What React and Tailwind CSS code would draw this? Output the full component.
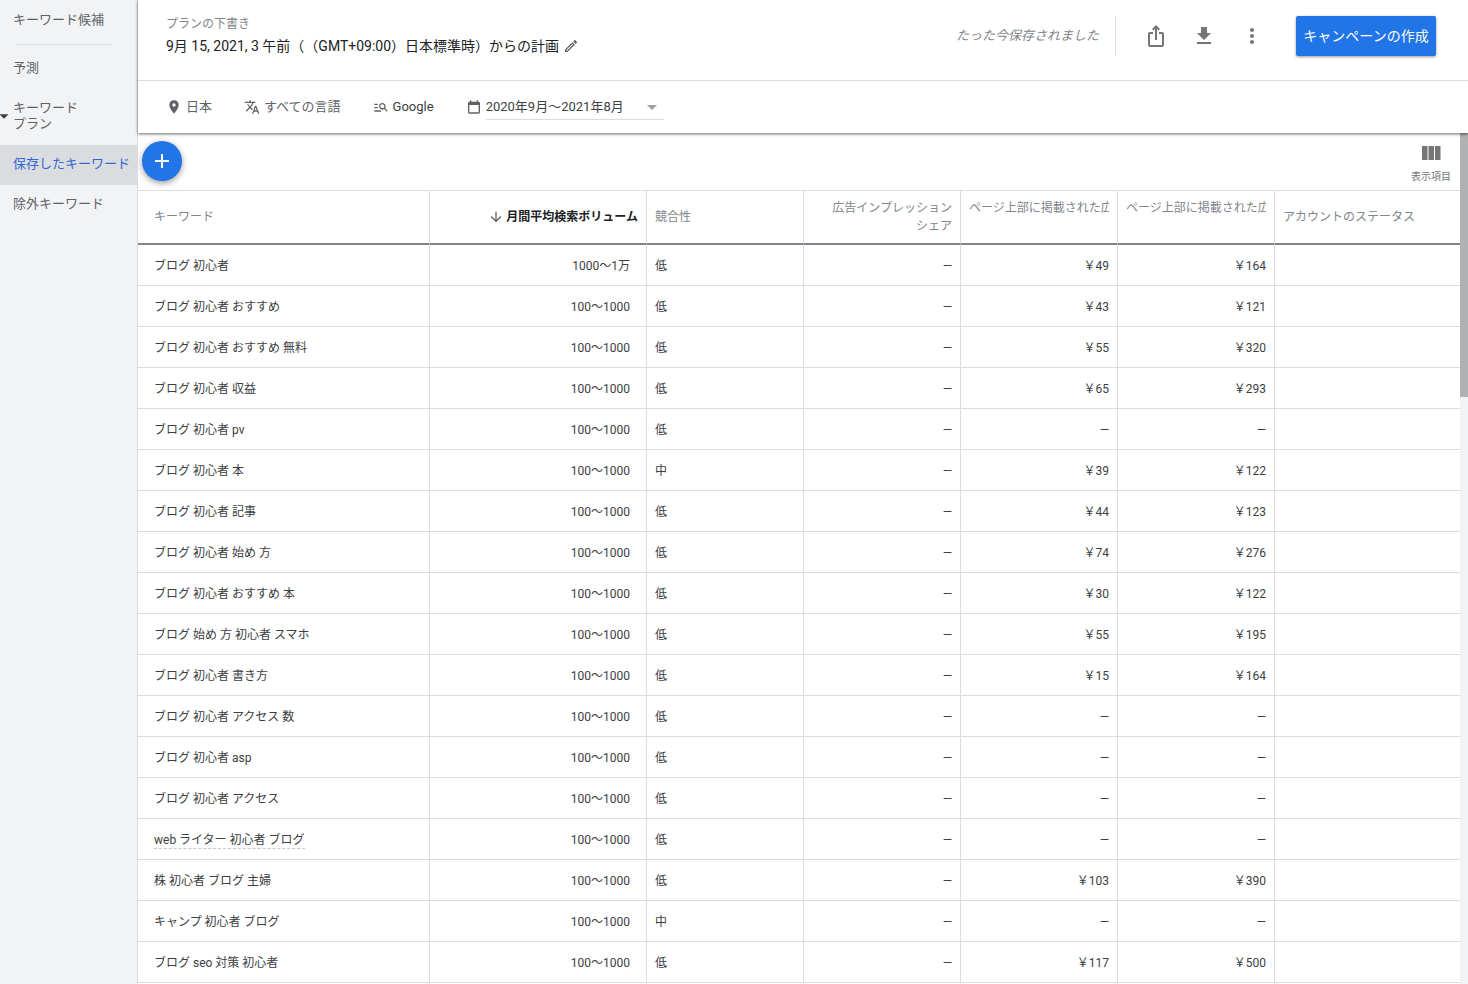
import { useState } from 'react'
import { MdAdd, MdArrowDownward, MdArrowDropDown, MdFileDownload, MdIosShare, MdLocationOn, MdManageSearch, MdMoreVert, MdOutlineEdit, MdTranslate } from 'react-icons/md'

const KEYWORDS = [
  { keyword: 'ブログ 初心者', volume: '1000〜1万', competition: '低', low: '￥49', high: '￥164' },
  { keyword: 'ブログ 初心者 おすすめ', volume: '100〜1000', competition: '低', low: '￥43', high: '￥121' },
  { keyword: 'ブログ 初心者 おすすめ 無料', volume: '100〜1000', competition: '低', low: '￥55', high: '￥320' },
  { keyword: 'ブログ 初心者 収益', volume: '100〜1000', competition: '低', low: '￥65', high: '￥293' },
  { keyword: 'ブログ 初心者 pv', volume: '100〜1000', competition: '低' },
  { keyword: 'ブログ 初心者 本', volume: '100〜1000', competition: '中', low: '￥39', high: '￥122' },
  { keyword: 'ブログ 初心者 記事', volume: '100〜1000', competition: '低', low: '￥44', high: '￥123' },
  { keyword: 'ブログ 初心者 始め 方', volume: '100〜1000', competition: '低', low: '￥74', high: '￥276' },
  { keyword: 'ブログ 初心者 おすすめ 本', volume: '100〜1000', competition: '低', low: '￥30', high: '￥122' },
  { keyword: 'ブログ 始め 方 初心者 スマホ', volume: '100〜1000', competition: '低', low: '￥55', high: '￥195' },
  { keyword: 'ブログ 初心者 書き方', volume: '100〜1000', competition: '低', low: '￥15', high: '￥164' },
  { keyword: 'ブログ 初心者 アクセス 数', volume: '100〜1000', competition: '低' },
  { keyword: 'ブログ 初心者 asp', volume: '100〜1000', competition: '低' },
  { keyword: 'ブログ 初心者 アクセス', volume: '100〜1000', competition: '低' },
  { keyword: 'web ライター 初心者 ブログ', volume: '100〜1000', competition: '低', hint: true },
  { keyword: '株 初心者 ブログ 主婦', volume: '100〜1000', competition: '低', low: '￥103', high: '￥390' },
  { keyword: 'キャンプ 初心者 ブログ', volume: '100〜1000', competition: '中' },
  { keyword: 'ブログ seo 対策 初心者', volume: '100〜1000', competition: '低', low: '￥117', high: '￥500' },
]

function CalendarIcon() {
  return (
    <svg viewBox="0 0 24 24" className="w-4 h-4 fill-current" aria-hidden="true">
      <path d="M19 4h-1V2h-2v2H8V2H6v2H5c-1.1 0-2 .9-2 2v14c0 1.1.9 2 2 2h14c1.1 0 2-.9 2-2V6c0-1.1-.9-2-2-2zm0 16H5V9h14v11z" />
    </svg>
  )
}

function ColumnsIcon() {
  return (
    <svg viewBox="0 0 24 24" className="w-6 h-6 fill-current" aria-hidden="true">
      <path d="M9.5 19h5.5V5H9.5v14zM3 19h5.5V5H3v14zM16 5v14h5.5V5H16z" />
    </svg>
  )
}

function Sidebar() {
  return (
    <nav className="w-[138px] shrink-0 bg-[#f1f3f4] border-r border-[#dadce0] text-[13px] leading-4 text-[#5f6368]">
      <a href="#ideas" className="flex items-center h-10 pl-[13px]">キーワード候補</a>
      <hr className="mt-1 mb-[3px] ml-4 mr-6 border-[#dadce0]" />
      <a href="#forecast" className="flex items-center h-10 pl-[13px]">予測</a>
      <a href="#plan" className="flex items-center h-[57px] pl-[13px] pb-[2px] relative">
        <MdArrowDropDown size={22} className="absolute -left-[7px] text-[#3c4043]" />
        <span>キーワード<br />プラン</span>
      </a>
      <a href="#saved" className="flex items-center h-10 pl-[13px] pb-[2px] bg-[#dadce0] text-[#3367d6] whitespace-nowrap" aria-current="page">保存したキーワード</a>
      <a href="#negative" className="flex items-center h-10 pl-[13px] pb-[2px]">除外キーワード</a>
    </nav>
  )
}

function PlanHeader() {
  return (
    <div className="flex items-start justify-between h-20 pl-7 pr-8 pt-4">
      <div>
        <div className="text-xs leading-4 text-[#80868b]">プランの下書き</div>
        <h1 className="flex items-center gap-1 mt-1 text-sm leading-5 text-[#202124] [text-spacing-trim:space-all]">
          9月 15, 2021, 3 午前（（GMT+09:00）日本標準時）からの計画
          <button aria-label="編集" className="text-[#5f6368]"><MdOutlineEdit size={16} /></button>
        </h1>
      </div>
      <div className="flex items-center h-10 text-[#757575]">
        <span className="h-10 flex items-center pr-4 border-r border-[#dadce0] text-[13px] italic text-[#80868b]">たった今保存されました</span>
        <div className="flex mx-4">
          <button aria-label="共有" className="w-12 h-10 flex items-center justify-center"><MdIosShare size={24} /></button>
          <button aria-label="ダウンロード" className="w-12 h-10 flex items-center justify-center"><MdFileDownload size={24} /></button>
          <button aria-label="その他" className="w-12 h-10 flex items-center justify-center"><MdMoreVert size={24} /></button>
        </div>
        <button className="w-[140px] h-10 ml-1 rounded-xs bg-[#2175e6] text-white text-sm whitespace-nowrap shadow-[0_1px_3px_rgba(0,0,0,0.4)]">キャンペーンの作成</button>
      </div>
    </div>
  )
}

function FilterBar() {
  const [period, setPeriod] = useState('2020年9月〜2021年8月')

  return (
    <div className="flex items-center h-[53px] pl-7 gap-8 border-t border-[#dadce0] text-[13px] text-[#5f6368]">
      <button className="flex items-center gap-1"><MdLocationOn size={16} />日本</button>
      <button className="flex items-center gap-1"><MdTranslate size={16} />すべての言語</button>
      <button className="flex items-center gap-1"><MdManageSearch size={16} /><span className="text-[#3c4043]">Google</span></button>
      <label className="flex items-center gap-1">
        <CalendarIcon />
        <span className="relative flex items-center">
          <select value={period} onChange={(e) => setPeriod(e.target.value)} aria-label="期間" className="appearance-none w-[178px] h-[26px] border-b border-[#dadce0] text-[#3c4043]">
            <option>2020年9月〜2021年8月</option>
          </select>
          <MdArrowDropDown size={24} className="absolute right-0 text-[#9aa0a6] pointer-events-none" />
        </span>
      </label>
    </div>
  )
}

function KeywordTable() {
  const th = 'h-[55px] px-2 border-t border-b-2 border-t-[#dadce0] border-b-[#80868b] border-r border-r-[#dadce0] font-normal'
  const td = 'h-[41px] px-2 pt-[2px] pb-0 border-b border-r border-[#dadce0]'

  return (
    <table className="w-full table-fixed border-separate border-spacing-0 text-xs text-[#3c4043]">
      <colgroup>
        <col className="w-[292px]" />
        <col className="w-[217px]" />
        <col className="w-[157px]" />
        <col className="w-[157px]" />
        <col className="w-[157px]" />
        <col className="w-[157px]" />
        <col />
      </colgroup>
      <thead className="text-[#80868b] leading-[18px]">
        <tr>
          <th className={`${th} pl-4 text-left`}>キーワード</th>
          <th className={`${th} text-[#202124]`}>
            <button className="flex items-center gap-[2px] ml-auto font-bold whitespace-nowrap">
              <MdArrowDownward size={16} className="text-[#5f6368]" />月間平均検索ボリューム
            </button>
          </th>
          <th className={`${th} text-left`}>競合性</th>
          <th className={`${th} text-right`}>広告インプレッション<br />シェア</th>
          <th className={`${th} text-left align-top pt-2`}><div className="overflow-hidden whitespace-nowrap">ページ上部に掲載された広</div></th>
          <th className={`${th} text-left align-top pt-2`}><div className="overflow-hidden whitespace-nowrap">ページ上部に掲載された広</div></th>
          <th className={`${th} border-r-0 text-left`}>アカウントのステータス</th>
        </tr>
      </thead>
      <tbody>
        {KEYWORDS.map((row) => (
          <tr key={row.keyword}>
            <td className={`${td} pl-4`}>
              <span className={row.hint ? 'pb-px border-b border-dashed border-[#c4c7cb]' : ''}>{row.keyword}</span>
            </td>
            <td className={`${td} pr-4 text-right`}>{row.volume}</td>
            <td className={td}>{row.competition}</td>
            <td className={`${td} text-right`}>—</td>
            <td className={`${td} text-right`}>{row.low || '—'}</td>
            <td className={`${td} text-right`}>{row.high || '—'}</td>
            <td className={`${td} border-r-0`}></td>
          </tr>
        ))}
      </tbody>
    </table>
  )
}

export default function App() {
  return (
    <div className="flex h-screen overflow-hidden bg-white font-['Roboto','Noto_Sans_CJK_JP',sans-serif]" lang="ja">
      <Sidebar />
      <main className="flex-1 min-w-0 flex flex-col">
        <header className="relative shrink-0 bg-white shadow-[0_1px_3px_rgba(0,0,0,0.6)]">
          <PlanHeader />
          <FilterBar />
        </header>
        <div className="flex flex-1 min-h-0">
          <div className="flex-1 min-w-0 overflow-hidden">
            <div className="flex items-start justify-between h-[57px] pl-1 pr-[9px] pt-2">
              <button aria-label="キーワードを追加" className="w-10 h-10 rounded-full bg-[#2175e6] text-white flex items-center justify-center shadow-[0_2px_6px_rgba(0,0,0,0.4)]">
                <MdAdd size={24} />
              </button>
              <button className="flex flex-col items-center gap-1 text-[10px] leading-4 text-[#757575]">
                <ColumnsIcon />
                表示項目
              </button>
            </div>
            <KeywordTable />
          </div>
          {/* Scrollbar */}
          <div className="w-2 shrink-0 bg-[#f1f3f4]">
            <div className="h-[31%] bg-[#b0b1b3]"></div>
          </div>
        </div>
      </main>
    </div>
  )
}
